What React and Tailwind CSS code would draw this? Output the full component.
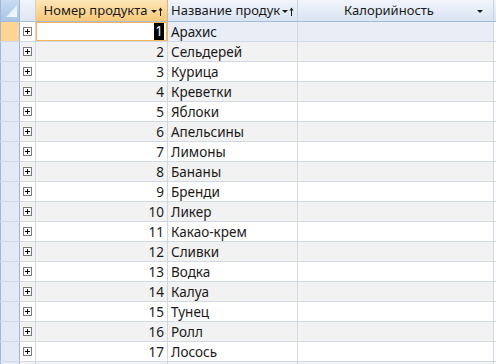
import React from "react";

const products = [
  "Арахис", "Сельдерей", "Курица", "Креветки", "Яблоки", "Апельсины", "Лимоны", "Бананы",
  "Бренди", "Ликер", "Какао-крем", "Сливки", "Водка", "Калуа", "Тунец", "Ролл", "Лосось",
];

const SortIcon = ({ arrow }) => (
  <svg width="12" height="9" viewBox="0 0 12 9" className="shrink-0">
    <polygon points="0,3 6,3 3,6" fill="#1b1b1b" />
    {arrow && (
      <>
        <line x1="9.5" y1="1.5" x2="9.5" y2="9" stroke="#1b1b1b" strokeWidth="1" />
        <polygon points="7.5,3.5 11.5,3.5 9.5,0.5" fill="#1b1b1b" />
      </>
    )}
  </svg>
);

const PlusBox = () => (
  <div className="w-[9px] h-[9px] border border-[#7a7a7a] bg-white flex items-center justify-center relative">
    <div className="absolute w-[5px] h-px bg-black" />
    <div className="absolute w-px h-[5px] bg-black" />
  </div>
);

const App = () => {
  return (
    <div
      className="w-[496px] h-[364px] overflow-hidden bg-white text-[#1a1a1a] text-[13.5px]"
      style={{ fontFamily: '"Noto Sans", "Open Sans", sans-serif' }}
    >
      {/* header */}
      <div className="flex h-[22px] border-b border-[#a7bcd6] text-[13px]">
        <div className="w-[20px] shrink-0 border-r border-l border-[#9fb7d6] bg-gradient-to-b from-[#c9dbf1] to-[#a9c4e6] relative">
          <svg width="19" height="21" viewBox="0 0 19 21" className="absolute left-0 top-0">
            <defs>
              <linearGradient id="tri" x1="0" y1="0" x2="1" y2="1">
                <stop offset="0" stopColor="#d9e6f6" />
                <stop offset="1" stopColor="#f7fafe" />
              </linearGradient>
            </defs>
            <polygon points="5,17 16,17 16,5" fill="url(#tri)" />
          </svg>
        </div>
        <div className="w-[16px] shrink-0 border-r border-[#c5d3e6] bg-gradient-to-b from-[#f3f6fb] to-[#dde6f2]" />
        <div className="w-[132px] shrink-0 border-r border-[#e6b36a] bg-gradient-to-b from-[#fde6b8] to-[#f8c878] flex items-center pl-[6px] pr-[4px] pt-px gap-[2px]">
          <span className="flex-1 text-center whitespace-nowrap">Номер продукта</span>
          <SortIcon arrow />
        </div>
        <div className="w-[130px] shrink-0 border-r border-[#c5d3e6] bg-gradient-to-b from-[#f1f5fb] to-[#d9e4f2] flex items-center pl-[3px] pr-[3px] pt-px gap-[2px]">
          <span className="flex-1 whitespace-nowrap">Название продук</span>
          <SortIcon arrow />
        </div>
        <div className="w-[196px] shrink-0 border-r border-[#c5d3e6] bg-gradient-to-b from-[#f1f5fb] to-[#d9e4f2] flex items-center pl-[3px] pr-[4px] pt-px">
          <span className="flex-1 text-center whitespace-nowrap">Калорийность</span>
          <SortIcon />
        </div>
        <div className="flex-1 bg-gradient-to-b from-[#f1f5fb] to-[#d9e4f2]" />
      </div>

      {/* rows */}
      {[...products, ""].map((name, i) => {
        const current = i === 0;
        const stripe = i % 2 === 1 ? "bg-[#f2f2f2]" : "bg-white";
        const rowBg = current ? "bg-[#e8edf6]" : stripe;
        return (
          <div key={i} className="flex h-[20px] border-b border-[#d2d9e6]">
            <div
              className={`w-[20px] shrink-0 border-l border-r border-[#9fb7d6] ${
                current ? "bg-[#fdd592]" : "bg-[#e3eaf5]"
              }`}
            />
            <div className={`w-[16px] shrink-0 border-r border-[#d2d9e6] flex items-center justify-center ${stripe}`}>
              {name && <PlusBox />}
            </div>
            <div
              className={`w-[132px] shrink-0 flex items-center justify-end pr-[3px] pt-[2px] ${
                current
                  ? "bg-white shadow-[inset_0_0_0_1px_#f5b45c] border-r border-[#f5b45c]"
                  : `${stripe} border-r border-[#d2d9e6]`
              }`}
            >
              {current ? (
                <span className="bg-black text-[#e6f6ff] px-px leading-[17px] h-[17px] -mt-[2px]">1</span>
              ) : (
                name && <span>{i + 1}</span>
              )}
            </div>
            <div className={`w-[130px] shrink-0 border-r border-[#d2d9e6] flex items-center pl-[3px] pt-[2px] whitespace-nowrap ${rowBg}`}>
              {name}
            </div>
            <div className={`w-[196px] shrink-0 border-r border-[#d2d9e6] ${rowBg}`} />
            <div className="flex-1 bg-white" />
          </div>
        );
      })}
    </div>
  );
};

export default App;
